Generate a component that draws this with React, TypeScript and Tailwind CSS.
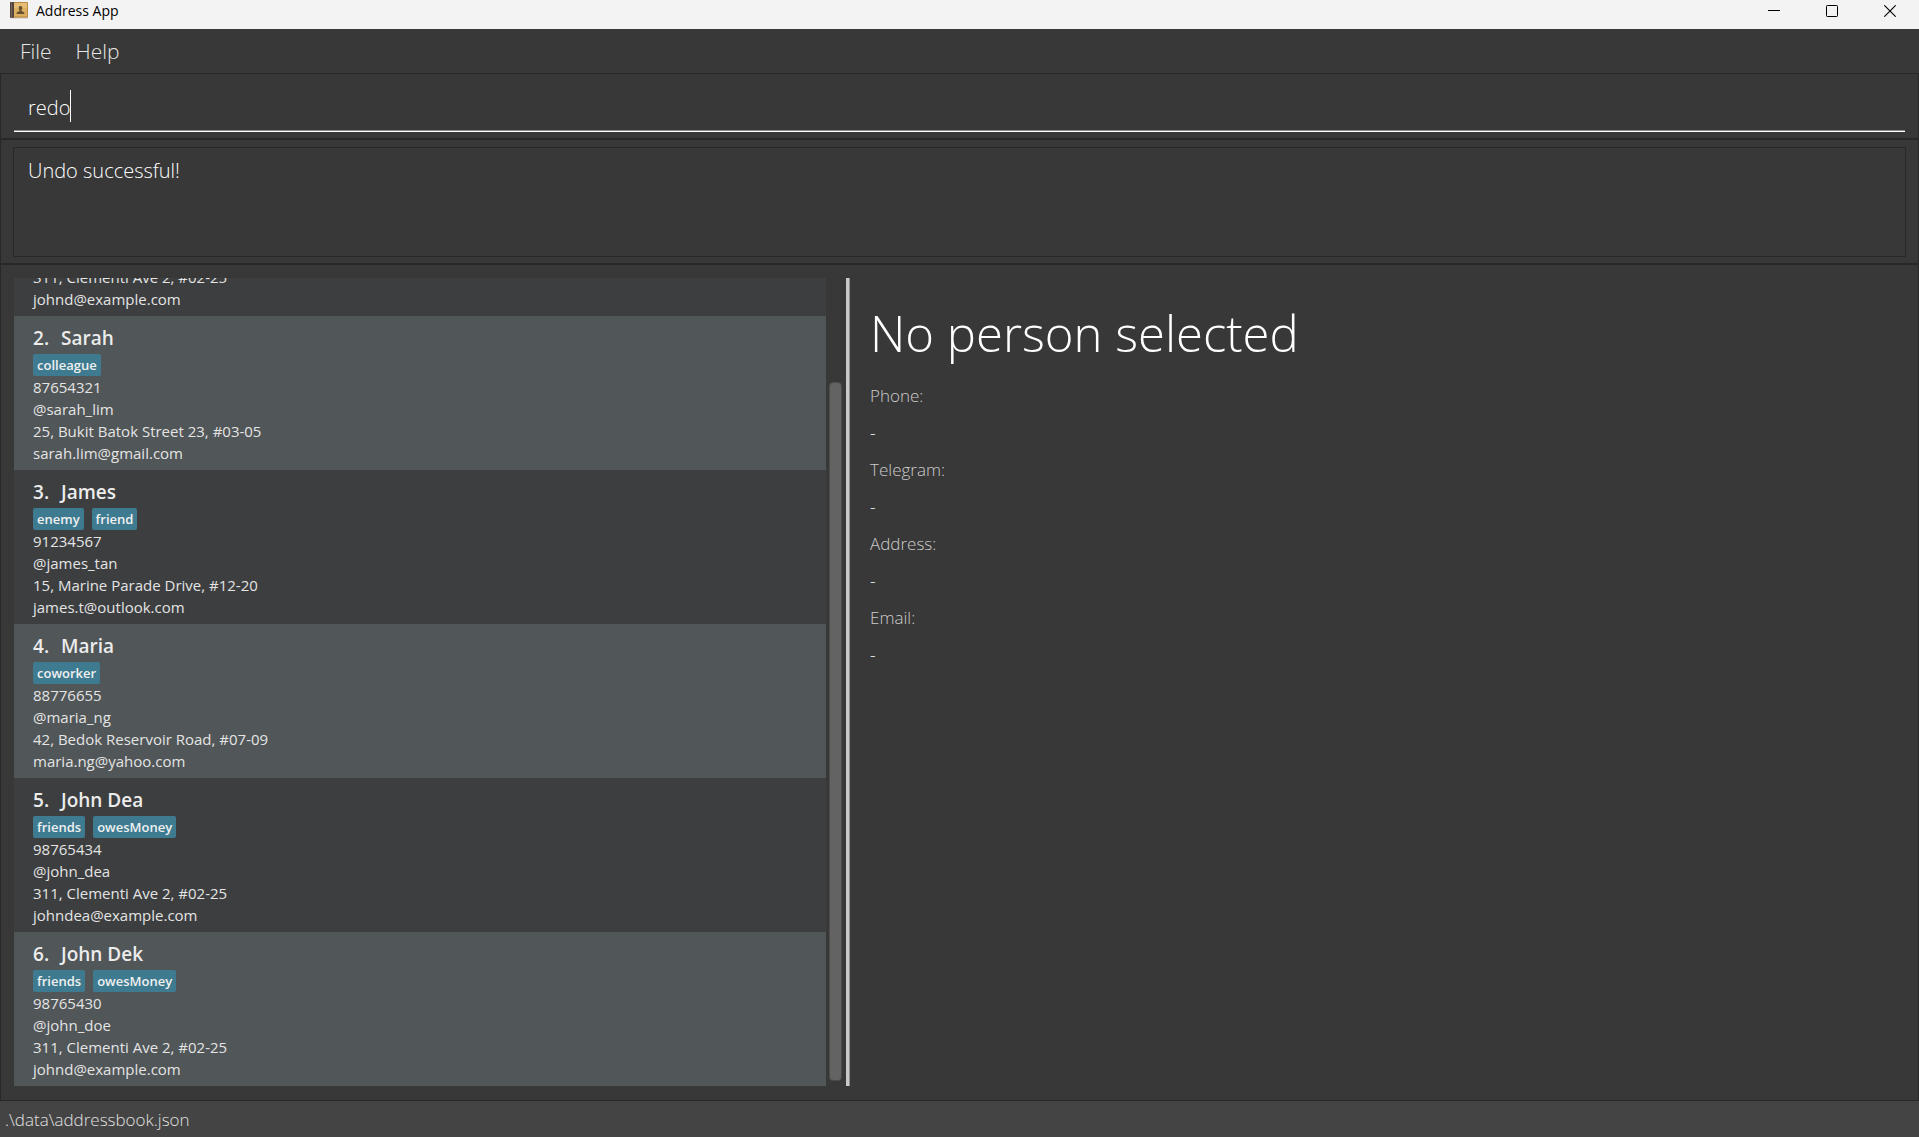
import { useState } from "react";

type Person = {
  id: number;
  name?: string;
  tags?: string[];
  phone?: string;
  telegram?: string;
  address: string;
  email: string;
};

const people: Person[] = [
  { id: 1, address: "311, Clementi Ave 2, #02-25", email: "johnd@example.com" },
  { id: 2, name: "Sarah", tags: ["colleague"], phone: "87654321", telegram: "@sarah_lim", address: "25, Bukit Batok Street 23, #03-05", email: "sarah.lim@gmail.com" },
  { id: 3, name: "James", tags: ["enemy", "friend"], phone: "91234567", telegram: "@james_tan", address: "15, Marine Parade Drive, #12-20", email: "james.t@outlook.com" },
  { id: 4, name: "Maria", tags: ["coworker"], phone: "88776655", telegram: "@maria_ng", address: "42, Bedok Reservoir Road, #07-09", email: "maria.ng@yahoo.com" },
  { id: 5, name: "John Dea", tags: ["friends", "owesMoney"], phone: "98765434", telegram: "@john_dea", address: "311, Clementi Ave 2, #02-25", email: "johndea@example.com" },
  { id: 6, name: "John Dek", tags: ["friends", "owesMoney"], phone: "98765430", telegram: "@john_doe", address: "311, Clementi Ave 2, #02-25", email: "johnd@example.com" },
];

const details = ["Phone:", "Telegram:", "Address:", "Email:"];

function BookIcon() {
  return (
    <svg width="18" height="17" viewBox="0 0 18 17" aria-hidden="true">
      <rect x="1" y="15.5" width="17" height="1" fill="#c9c9c9" />
      <rect x="0" y="0" width="18" height="15.7" rx="0.8" fill="#b98a45" />
      <rect x="0" y="0" width="4" height="15.7" rx="0.6" fill="#54453f" />
      <rect x="1" y="0.5" width="1" height="14.7" fill="#75655e" />
      <rect x="4" y="1" width="13" height="13.5" fill="#dcae60" />
      <rect x="4" y="1" width="13" height="5" fill="#e6bd74" />
      <path d="M10.5 4c1.300 0 1.900.9 1.800 2-.1.900-.5 1.500-.8 1.900v1c.2.500 2.700.6 2.900 2.100v.9H6.600V11c.2-1.500 2.700-1.600 2.900-2.100v-1c-.3-.4-.7-1-.8-1.900-.1-1.100.5-2 1.800-2z" fill="#66502f" />
    </svg>
  );
}

function TitleBar() {
  const button = "flex w-[58px] items-center justify-center text-black";
  return (
    <header className="flex h-[29px] shrink-0 bg-[#f3f3f3] pb-2 pl-2.5 text-black">
      <div className="flex flex-1 items-center gap-2">
        <BookIcon />
        <span className="text-sm">Address App</span>
      </div>
      <button type="button" aria-label="Minimize" className={button}>
        <svg width="12" height="12" viewBox="0 0 12 12" shapeRendering="crispEdges">
          <rect x="0" y="5" width="12" height="1" fill="currentColor" />
        </svg>
      </button>
      <button type="button" aria-label="Maximize" className={button}>
        <svg width="12" height="12" viewBox="0 0 12 12" fill="none" stroke="currentColor">
          <rect x="0.5" y="0.5" width="11" height="11" rx="0.8" />
        </svg>
      </button>
      <button type="button" aria-label="Close" className={button}>
        <svg width="12" height="12" viewBox="0 0 12 12" fill="none" stroke="currentColor" strokeWidth="1.1">
          <path d="M0.3 0.3 11.7 11.7M11.7 0.3 0.3 11.7" />
        </svg>
      </button>
    </header>
  );
}

function PersonCard({ person }: { person: Person }) {
  return (
    <li className="shrink-0 bg-[#3c3e3f] px-[19px] pt-2 pb-1.5 text-[15px] leading-[22px] text-[#e4e4e4] even:bg-[#515658]">
      {person.name && (
        <h2 className="mb-0.5 flex text-[19px] leading-7 font-semibold text-[#ececec]">
          <span className="w-7">{person.id}.</span>
          <span>{person.name}</span>
        </h2>
      )}
      {person.tags && (
        <div className="flex gap-2">
          {person.tags.map((tag) => (
            <span key={tag} className="rounded-xs bg-[#3e7b91] px-1 text-[13px] leading-[22px] font-semibold text-[#f0f0f0]">
              {tag}
            </span>
          ))}
        </div>
      )}
      {person.phone && <p>{person.phone}</p>}
      {person.telegram && <p>{person.telegram}</p>}
      <p>{person.address}</p>
      <p>{person.email}</p>
    </li>
  );
}

export default function App() {
  const [command, setCommand] = useState("redo");
  return (
    <div className="flex h-screen flex-col overflow-hidden bg-[#383838] font-['Open_Sans','Noto_Sans',sans-serif]">
      <TitleBar />
      <nav className="flex h-11 shrink-0 items-center gap-6 px-5 pt-0.5 text-[21px] font-light text-[#e6e6e6]">
        <button type="button">File</button>
        <button type="button">Help</button>
      </nav>

      <section className="border border-[#282828] px-[13px] pt-2 pb-1.5">
        <div className="flex items-center border-b border-white pt-2 pb-[9px] pl-3.5 shadow-[inset_0_-1px_0_#8a8a8a]">
          <input
            aria-label="Command"
            value={command}
            onChange={(e) => setCommand(e.target.value)}
            className="field-sizing-content h-8 pt-0.5 text-xl leading-[30px] font-light text-white caret-transparent outline-none"
          />
          <span aria-hidden="true" className="h-8 w-px bg-white" />
        </div>
      </section>

      <section className="border border-[#282828] px-3 pt-[7px] pb-1.5">
        <textarea
          readOnly
          aria-label="Result"
          value="Undo successful!"
          className="block h-[110px] w-full resize-none border border-[#282828] px-3.5 pt-[9px] text-xl leading-7 font-light text-white outline-none"
        />
      </section>

      <main className="flex min-h-0 flex-1 border border-[#282828] px-[13px] pt-[13px] pb-3.5">
        <div className="flex w-[44%] shrink-0">
          <ul className="flex min-w-0 flex-1 flex-col justify-end overflow-hidden">
            {people.map((person) => (
              <PersonCard key={person.id} person={person} />
            ))}
          </ul>
          <div className="flex w-5 flex-col items-center justify-end pr-px pb-[5px]">
            <div className="h-[87%] w-[13px] rounded border border-[#4c4c4c] bg-[#636363]" />
          </div>
        </div>
        <div className="w-1 shrink-0 border-r border-[#8f8f8f] bg-[#c9c9c9]" />
        <section className="flex-1 pt-[25px] pl-5 text-[17px] leading-[37px] font-light">
          <h1 className="mb-3.5 text-[49px] leading-[60px] text-white">No person selected</h1>
          <dl>
            {details.map((label) => (
              <div key={label}>
                <dt className="text-[#cccccc]">{label}</dt>
                <dd className="text-white">-</dd>
              </div>
            ))}
          </dl>
        </section>
      </main>

      <footer className="flex h-9 shrink-0 items-center bg-[#444444] px-[5px] pt-0.5 text-[17px] font-light text-[#e0e0e0]">
        .\data\addressbook.json
      </footer>
    </div>
  );
}
